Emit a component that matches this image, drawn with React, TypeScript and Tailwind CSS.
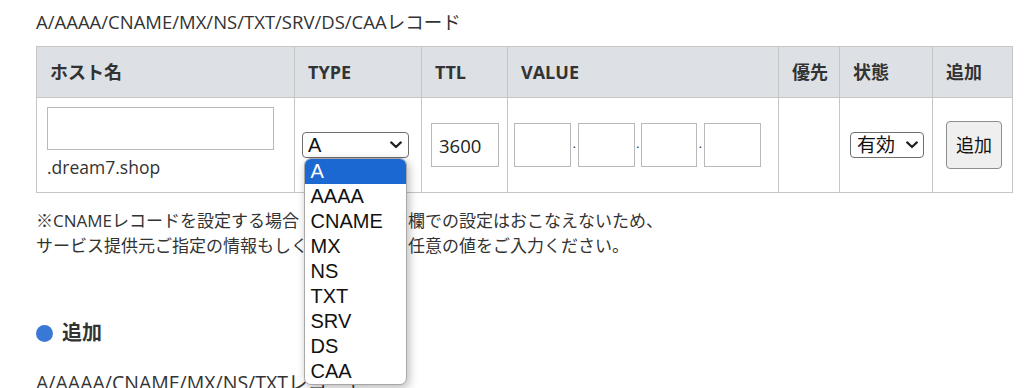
/**
 * DNSレコード追加フォーム
 *
 * - ホスト名 / TYPE / TTL / VALUE / 優先 / 状態 / 追加 の入力テーブル
 * - TYPE のプルダウンが開いた状態を再現
 */

import React from 'react';

const TYPES = ['A', 'AAAA', 'CNAME', 'MX', 'NS', 'TXT', 'SRV', 'DS', 'CAA'];

const Chevron: React.FC = () => (
  <svg width="12" height="8" viewBox="0 0 12 8" className="shrink-0">
    <path d="M1.2 1.4 L6 6 L10.8 1.4" fill="none" stroke="#222" strokeWidth="2.2" strokeLinecap="round" strokeLinejoin="round" />
  </svg>
);

const App: React.FC = () => {
  const th = 'border border-[#c6c6c6] pl-[13px] text-left font-bold text-[18px] leading-[24px]';
  const td = 'border border-[#c6c6c6] align-middle';
  const box = 'border border-[#b9b9b9] bg-white outline-none';
  const dot = 'mb-[17px] w-[6.5px] text-center text-[12px] leading-none text-[#222]';

  return (
    <div className="w-[1024px] h-[388px] overflow-hidden bg-white pl-[36px] text-[#333] font-['Open_Sans','Noto_Sans_CJK_JP',sans-serif]">
      {/* 見出し */}
      <p className="pt-[8px] text-[18.5px] leading-[28px]">A/AAAA/CNAME/MX/NS/TXT/SRV/DS/CAAレコード</p>

      {/* 入力テーブル */}
      <table className="mt-[10px] w-[976px] table-fixed border-collapse">
        <colgroup>
          <col className="w-[258px]" />
          <col className="w-[127px]" />
          <col className="w-[86px]" />
          <col className="w-[271px]" />
          <col className="w-[61px]" />
          <col className="w-[93px]" />
          <col className="w-[80px]" />
        </colgroup>
        <thead>
          <tr className="bg-[#dde1e6]">
            <th className={`${th} h-[51px]`}>ホスト名</th>
            <th className={th}>TYPE</th>
            <th className={th}>TTL</th>
            <th className={th}>VALUE</th>
            <th className={th}>優先</th>
            <th className={th}>状態</th>
            <th className={th}>追加</th>
          </tr>
        </thead>
        <tbody>
          <tr>
            {/* ホスト名 */}
            <td className={`${td} h-[95px] pl-[10px] pb-[3px]`}>
              <input type="text" className={`${box} block w-[227px] h-[43px] px-[6px] text-[17px]`} />
              <div className="mt-[5px] text-[17.5px] leading-[25px]">.dream7.shop</div>
            </td>

            {/* TYPE（プルダウン展開中） */}
            <td className={`${td} pl-[7px]`}>
              <div className="relative w-[107px]">
                <div className="flex h-[26px] items-center justify-between rounded-[4px] border border-[#6e6e6e] bg-white pl-[5px] pr-[6px] font-['Liberation_Sans',Arial,sans-serif] text-[20px] text-[#111]">
                  <span className="leading-[24px]">A</span>
                  <Chevron />
                </div>
                <ul className="absolute left-[1.5px] top-full z-10 w-[103px] overflow-hidden rounded-[7px] border border-[#a8a8a8] bg-white font-['Liberation_Sans',Arial,sans-serif] text-[20px] text-[#111] shadow-[2px_3px_10px_rgba(0,0,0,0.28)]">
                  {TYPES.map((t, i) => (
                    <li
                      key={t}
                      className={`h-[25px] pl-[6px] leading-[25px] ${i === 0 ? 'bg-[#1b68d3] text-white' : ''}`}
                    >
                      {t}
                    </li>
                  ))}
                </ul>
              </div>
            </td>

            {/* TTL */}
            <td className={`${td} pl-[9px]`}>
              <input type="text" defaultValue="3600" className={`${box} block w-[68px] h-[44px] pl-[7px] text-[18.5px] text-[#222]`} />
            </td>

            {/* VALUE */}
            <td className={`${td} pl-[6px]`}>
              <div className="flex items-end">
                <input type="text" className={`${box} w-[57px] h-[44px]`} />
                <span className={dot}>.</span>
                <input type="text" className={`${box} w-[57px] h-[44px]`} />
                <span className={dot}>.</span>
                <input type="text" className={`${box} w-[56px] h-[44px]`} />
                <span className={dot}>.</span>
                <input type="text" className={`${box} w-[57.5px] h-[44px]`} />
              </div>
            </td>

            {/* 優先 */}
            <td className={td}></td>

            {/* 状態 */}
            <td className={`${td} pl-[10px]`}>
              <div className="flex h-[26px] w-[74px] items-center justify-between rounded-[4px] border border-[#6e6e6e] bg-white pl-[6px] pr-[5px] text-[19px] text-[#111]">
                <span className="leading-[24px]">有効</span>
                <Chevron />
              </div>
            </td>

            {/* 追加 */}
            <td className={`${td} pl-[13px]`}>
              <button className="flex h-[48px] w-[56px] items-center justify-center rounded-[4px] border border-[#8e8e8e] bg-[#efefef] text-[18px] text-[#111]">
                追加
              </button>
            </td>
          </tr>
        </tbody>
      </table>

      {/* 注意書き（中央部分はプルダウンに隠れている） */}
      <p className="mt-[15px] text-[17px] leading-[25px]">
        ※CNAMEレコードを設定する場合<span className="inline-block w-[109px] overflow-hidden whitespace-nowrap pl-[6px] align-top">、ホスト名の</span>欄での設定はおこなえないため、
        <br />
        サービス提供元ご指定の情報もしく<span className="inline-block w-[100px] overflow-hidden whitespace-nowrap align-top">は、お客様</span>任意の値をご入力ください。
      </p>

      {/* 追加セクション */}
      <div className="mt-[60px] flex items-center gap-[9px] h-[30px]">
        <span className="h-[17px] w-[17px] rounded-full bg-[#3a78d6]"></span>
        <h3 className="text-[20px] font-bold leading-[30px]">追加</h3>
      </div>
      <p className="mt-[21px] text-[19.5px] leading-[28px]">A/AAAA/CNAME/MX/NS/TXTレコード</p>
    </div>
  );
};

export default App;
